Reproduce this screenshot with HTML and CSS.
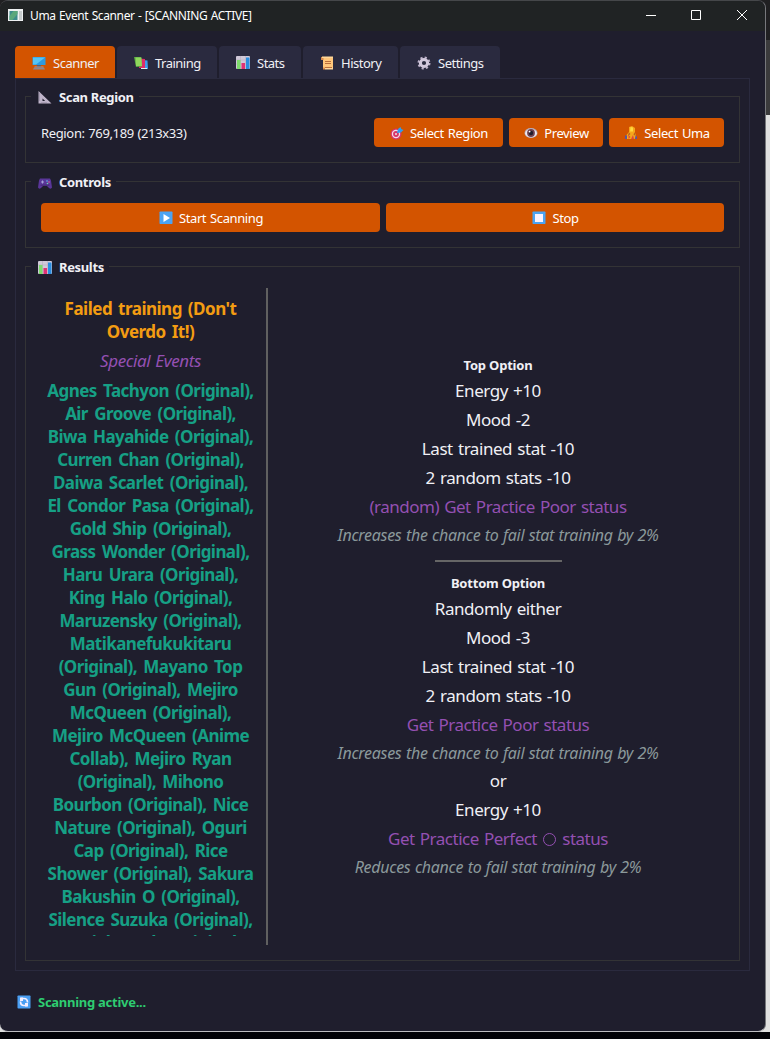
FILE: index.html
```html
<!DOCTYPE html>
<html lang="en">
<head>
<meta charset="utf-8">
<title>Uma Event Scanner</title>
<link rel="stylesheet" href="styles.css">
</head>
<body>
<svg class="defs" width="0" height="0">
  <symbol id="monitor" viewBox="0 0 14 14"><rect x="0.5" y="1" width="13" height="8" rx=".6" fill="#2d9be0"/><path fill="#55c5f6" d="M1 1.500h12L4 8.500H1z"/><path fill="#59616e" d="M5 9h4v2H5z"/><path fill="#a39aa5" d="M2.500 10.500h9v1h-9z"/><path fill="#8b8790" d="M2 11.500h10l1 2H1z"/></symbol>
  <symbol id="books" viewBox="0 0 14 14"><path fill="#3d9bea" d="M8 4l5.500.5.5 8.500-6 0z"/><path fill="#e5eaf0" d="M7 12h6v1H7z"/><path fill="#dc2d68" d="M5 2.500l6 .5 0 9H5z"/><path fill="#57a843" d="M0 1l7 0 1 9.500-6 .5z"/><path fill="#8fd75c" d="M1.500 1.500h6l.5 8.500H2z"/></symbol>
  <symbol id="chart" viewBox="0 0 14 14"><rect width="14" height="13" rx="1" fill="#d0c9d8"/><path stroke="#b8aec5" stroke-width=".6" d="M0 4h14M0 8h14M4.500 0v13M9.500 0v13"/><rect x="1" y="4" width="3.500" height="9" fill="#7ddb6c"/><rect x="5.500" y="7" width="3.500" height="6" fill="#df3275"/><rect x="10" y="1.500" width="3.500" height="11.500" fill="#298ee0"/></symbol>
  <symbol id="scroll" viewBox="0 0 14 14"><path fill="#ffc77b" d="M3 1h10v12H3z"/><path fill="#d98b4b" d="M1 1h2.500v3H1zM3 11.500h2v2H3z"/><path fill="#ffd79a" d="M2 .5h11v1.500H2zM5 11.500h8v2H5z"/><path stroke="#b96f3c" d="M5 5.500h6M5 7.500h6M5 11.500h7"/></symbol>
  <symbol id="gear" viewBox="0 0 14 14"><circle cx="7" cy="7" r="5.500" fill="none" stroke="#bdb2ca" stroke-width="2" stroke-dasharray="2.160 2.160"/><circle cx="7" cy="7" r="3.600" fill="none" stroke="#d2c8dc" stroke-width="3"/></symbol>
  <symbol id="ruler" viewBox="0 0 14 14"><path fill="#bfb4ca" fill-rule="evenodd" d="M.5 0v12.500h13zM4.500 7.500v2.500h2.700z"/><path stroke="#847a92" stroke-width=".7" d="M1 3h1M1 5h1M1 7h1M1 9h1M4 12v-1M6 12v-1M8 12v-1"/></symbol>
  <symbol id="pad" viewBox="0 0 14 14"><path fill="#5a3699" d="M2 2.500h10l1 2 1 7q-1 2-3 .5l-2-2H5l-2 2q-2 1.500-3-.5l1-7z"/><path fill="#4a2c80" d="M2.500 8.500h9v1.500h-9z"/><path stroke="#a5a0d8" d="M4.500 4.500v3M3 6h3"/><circle cx="9" cy="5" r=".8" fill="#5abcf0"/><circle cx="11" cy="6" r=".8" fill="#e06898"/><circle cx="9.500" cy="7.500" r=".8" fill="#6fd2b0"/></symbol>
  <symbol id="target" viewBox="0 0 14 14"><circle cx="6" cy="8" r="5.500" fill="#d83468"/><circle cx="6" cy="8" r="4.200" fill="#f2dce9"/><circle cx="6" cy="8" r="2.900" fill="#d83468"/><circle cx="6" cy="8" r="1" fill="#f2dce9"/><path fill="#2e9cf0" d="M7 7L8 3l2.500-2 .8 2 2.200 1-2.500 2.500z"/></symbol>
  <symbol id="eye" viewBox="0 0 14 14"><ellipse cx="7" cy="7" rx="6.500" ry="5" fill="#b9aebb"/><ellipse cx="7" cy="7.300" rx="5.800" ry="4" fill="#eee7ef"/><circle cx="7" cy="7" r="3.900" fill="#70424f"/><circle cx="7" cy="7" r="2.200" fill="#201d2c"/><circle cx="5.600" cy="5.600" r=".9" fill="#fff"/></symbol>
  <symbol id="uma" viewBox="0 0 14 14"><path fill="#f6a61b" d="M5 1l3-1 3 2v5l1.500 4-2 2H3l-.5-4L5 6z"/><path fill="#b7601f" d="M5 6.500l1.500 1.500-3 2.500zM10.500 6l1 4-2-1.500z"/><path fill="#ffd93d" d="M6.500 1l2.500.5v4l-3 0z"/><path fill="#5a55a0" d="M1 9.500h2V13H1zM11.500 9.500l1.500 1v2.500h-2z"/><path fill="#e0463d" d="M4.500 9l2 2-2 2zM9 9l1 4H7z"/></symbol>
  <symbol id="play" viewBox="0 0 14 14"><rect x=".5" y=".5" width="13" height="12.500" rx=".8" fill="#4ba3f3"/><path fill="#fff" d="M4.500 3l6.500 4-6.500 4z"/></symbol>
  <symbol id="stop" viewBox="0 0 14 14"><rect x=".5" y=".5" width="13" height="12.500" rx=".8" fill="#4ba3f3"/><rect x="3" y="3" width="8" height="8" fill="#faf2fe"/></symbol>
  <symbol id="sync" viewBox="0 0 14 14"><rect x=".5" y=".5" width="13" height="13" rx=".8" fill="#4b9ff3"/><path fill="none" stroke="#f5efff" stroke-width="1.700" d="M3.500 6.500q0 4 3.500 4h3M10.500 7.500q0-4-3.500-4H4"/><path fill="#f5efff" d="M3 2.500h3v3.500H3zM11 11.500H8V8h3z"/></symbol>
</svg>
<div class="desktop">
  <main class="window">
    <header class="titlebar">
      <svg class="app-icon" viewBox="0 0 15 12"><rect width="15" height="12" fill="#eef1f2"/><rect x="1.500" y="2" width="8" height="9" fill="#3d8c8c"/><path fill="#5aa77c" d="M1.500 7l4-5h4v3l-5 6h-3z"/><rect x="11" y="2" width="3" height="9" fill="#c6cccd"/></svg>
      <span class="title">Uma Event Scanner - [SCANNING ACTIVE]</span>
      <svg class="caption" viewBox="0 0 110 12"><path fill="none" stroke="#fff" d="M0 6.500h10M45.500 1.500h9v9h-9zM91 1l10 10M101 1L91 11"/></svg>
    </header>
    <nav class="tabs">
      <a class="tab active w100"><svg><use href="#monitor"/></svg><span>Scanner</span></a>
      <a class="tab w100"><svg><use href="#books"/></svg><span>Training</span></a>
      <a class="tab w82"><svg><use href="#chart"/></svg><span>Stats</span></a>
      <a class="tab w95"><svg><use href="#scroll"/></svg><span>History</span></a>
      <a class="tab w100"><svg><use href="#gear"/></svg><span>Settings</span></a>
    </nav>
    <div class="pane">
      <section class="group region">
        <h2><svg><use href="#ruler"/></svg><span>Scan Region</span></h2>
        <div class="row">
          <span class="region-text">Region: 769,189 (213x33)</span>
          <button class="b129"><svg><use href="#target"/></svg><span>Select Region</span></button>
          <button class="b94"><svg><use href="#eye"/></svg><span>Preview</span></button>
          <button class="b115"><svg><use href="#uma"/></svg><span>Select Uma</span></button>
        </div>
      </section>
      <section class="group controls">
        <h2><svg><use href="#pad"/></svg><span>Controls</span></h2>
        <div class="row">
          <button class="b339"><svg><use href="#play"/></svg><span>Start Scanning</span></button>
          <button class="b338"><svg><use href="#stop"/></svg><span>Stop</span></button>
        </div>
      </section>
      <section class="group results">
        <h2><svg><use href="#chart"/></svg><span>Results</span></h2>
        <div class="columns">
          <div class="event">
            <p class="name">Failed training (Don't<br>Overdo It!)</p>
            <p class="kind">Special Events</p>
            <p class="owners">Agnes Tachyon (Original),<br>Air Groove (Original),<br>Biwa Hayahide (Original),<br>Curren Chan (Original),<br>Daiwa Scarlet (Original),<br>El Condor Pasa (Original),<br>Gold Ship (Original),<br>Grass Wonder (Original),<br>Haru Urara (Original),<br>King Halo (Original),<br>Maruzensky (Original),<br>Matikanefukukitaru<br>(Original), Mayano Top<br>Gun (Original), Mejiro<br>McQueen (Original),<br>Mejiro McQueen (Anime<br>Collab), Mejiro Ryan<br>(Original), Mihono<br>Bourbon (Original), Nice<br>Nature (Original), Oguri<br>Cap (Original), Rice<br>Shower (Original), Sakura<br>Bakushin O (Original),<br>Silence Suzuka (Original),<br>Special Week (Original),</p>
          </div>
          <div class="rule"></div>
          <div class="options">
            <h3>Top Option</h3>
            <p>Energy +10</p>
            <p>Mood -2</p>
            <p>Last trained stat -10</p>
            <p>2 random stats -10</p>
            <p class="status">(random) Get Practice Poor status</p>
            <p class="note">Increases the chance to fail stat training by 2%</p>
            <div class="divider"></div>
            <h3>Bottom Option</h3>
            <p>Randomly either</p>
            <p>Mood -3</p>
            <p>Last trained stat -10</p>
            <p>2 random stats -10</p>
            <p class="status">Get Practice Poor status</p>
            <p class="note">Increases the chance to fail stat training by 2%</p>
            <p>or</p>
            <p>Energy +10</p>
            <p class="status">Get Practice Perfect <i class="ring"></i> status</p>
            <p class="note">Reduces chance to fail stat training by 2%</p>
          </div>
        </div>
      </section>
    </div>
    <footer class="statusbar"><svg><use href="#sync"/></svg><span>Scanning active...</span></footer>
  </main>
  <aside class="behind"></aside>
</div>
</body>
</html>
```

FILE: styles.css
```css
* { box-sizing: border-box; }
body { margin: 0; background: #020207; font-family: "Noto Sans", "Open Sans", sans-serif; color: #f0f0f5; overflow: hidden; }
p, h2, h3 { margin: 0; }
.defs { position: absolute; }
.desktop { display: flex; width: 770px; height: 1032px; background: linear-gradient(#202022 0 40px, #e0e0e0 40px); }
.window { width: 766px; height: 1032px; flex: none; display: flex; flex-direction: column; background: #1f1e2d; border: solid #45474a; border-width: 1px 1px 1px 0; border-right-color: #77787c; border-bottom-color: #bcbcc0; border-radius: 8px; overflow: hidden; }
.behind { flex: 1; background: linear-gradient(#202022 0 40px, #3b3b3c 40px 115px, #e0e0e0 115px); }
.titlebar { height: 30px; flex: none; display: flex; align-items: center; background: #202324; padding-left: 8px; }
.app-icon { width: 15px; height: 12px; margin-top: -2px; }
.title { flex: 1; margin: -1px 0 0 7px; font-size: 12px; letter-spacing: -.38px; word-spacing: .6px; white-space: nowrap; color: #fff; }
.caption { width: 110px; height: 12px; margin: -2px 9px 0 0; }
.tabs { display: flex; gap: 2px; height: 32px; margin: 15px 0 0 15px; flex: none; }
.tab { display: flex; align-items: center; gap: 7px; height: 33px; padding: 1px 0 0 17px; border-radius: 4px 4px 0 0; background: #2a2a3f; font-size: 13px; letter-spacing: -.5px; }
.tab span { margin-top: -1px; }
.tab.active { background: #d35400; }
.w100 { width: 100px; }
.w82 { width: 82px; }
.w95 { width: 95px; }
.tab svg, h2 svg, button svg, .statusbar svg { width: 14px; height: 14px; flex: none; }
.pane { display: flex; flex-direction: column; gap: 18px; width: 735px; height: 893px; flex: none; margin-left: 15px; border: 1px solid #2a2a3e; padding: 17px 9px 9px; }
.group { border: 1px solid #333335; width: 715px; padding: 0 15px; flex: none; }
.region, .controls { height: 67px; }
.results { height: 695px; }
h2 { display: flex; align-items: center; gap: 7px; width: max-content; height: 20px; margin: -10px 0 0 -10px; padding: 0 5px 0 7px; background: #1f1e2d; font-size: 13px; font-weight: 700; letter-spacing: -.35px; }
h2 svg { margin-top: 1px; }
.row { display: flex; align-items: center; gap: 6px; height: 29px; margin-top: 11px; }
.region-text { flex: 1; font-size: 13px; letter-spacing: -.35px; word-spacing: .5px; }
button { display: flex; align-items: center; justify-content: center; gap: 6px; height: 29px; padding: 1px 0 0 1px; border: 0; border-radius: 4px; background: #d35400; color: #fff; font: 13px "Noto Sans", "Open Sans", sans-serif; letter-spacing: -.4px; word-spacing: 1px; white-space: nowrap; }
.b129 { width: 129px; }
.b94 { width: 94px; }
.b115 { width: 115px; }
.b339 { width: 339px; }
.b338 { width: 338px; }
.columns { display: flex; height: 657px; margin-top: 11px; }
.event { width: 219px; height: 648px; padding-top: 9px; overflow: hidden; text-align: center; white-space: nowrap; font-size: 17px; line-height: 23px; }
.name { color: #f39c12; font-weight: 700; letter-spacing: -.5px; word-spacing: 2px; }
.kind { margin-top: 6px; color: #9450b2; font-style: italic; letter-spacing: -.4px; word-spacing: 1px; }
.owners { margin-top: 7px; color: #16a085; font-weight: 700; letter-spacing: -.57px; word-spacing: 2.500px; }
.rule { width: 2px; height: 657px; margin-left: 6px; background: #606060; }
.options { flex: 1; margin-left: 4px; padding-top: 68px; text-align: center; font-size: 17px; line-height: 23px; white-space: nowrap; letter-spacing: -.45px; word-spacing: 1.200px; }
.options p { margin-bottom: 6px; }
h3 { height: 18px; margin-bottom: 5px; font-size: 13px; line-height: 18px; font-weight: 700; letter-spacing: -.2px; word-spacing: 0; }
.options .status { color: #9450b2; letter-spacing: -.5px; }
.options .note { margin-bottom: 5px; color: #8b999b; font-style: italic; font-size: 16px; line-height: 22px; letter-spacing: -.3px; word-spacing: .600px; }
.divider { width: 127px; height: 2px; margin: 14px auto 12px; background: #666; }
.ring { display: inline-block; width: 13px; height: 13px; margin: 0 1px; border: 1px solid #9450b2; border-radius: 50%; vertical-align: -1px; }
.statusbar { display: flex; align-items: center; gap: 7px; height: 20px; margin: 21px 0 0 17px; color: #2ecc71; font-size: 13px; font-weight: 700; letter-spacing: -.27px; }
```
